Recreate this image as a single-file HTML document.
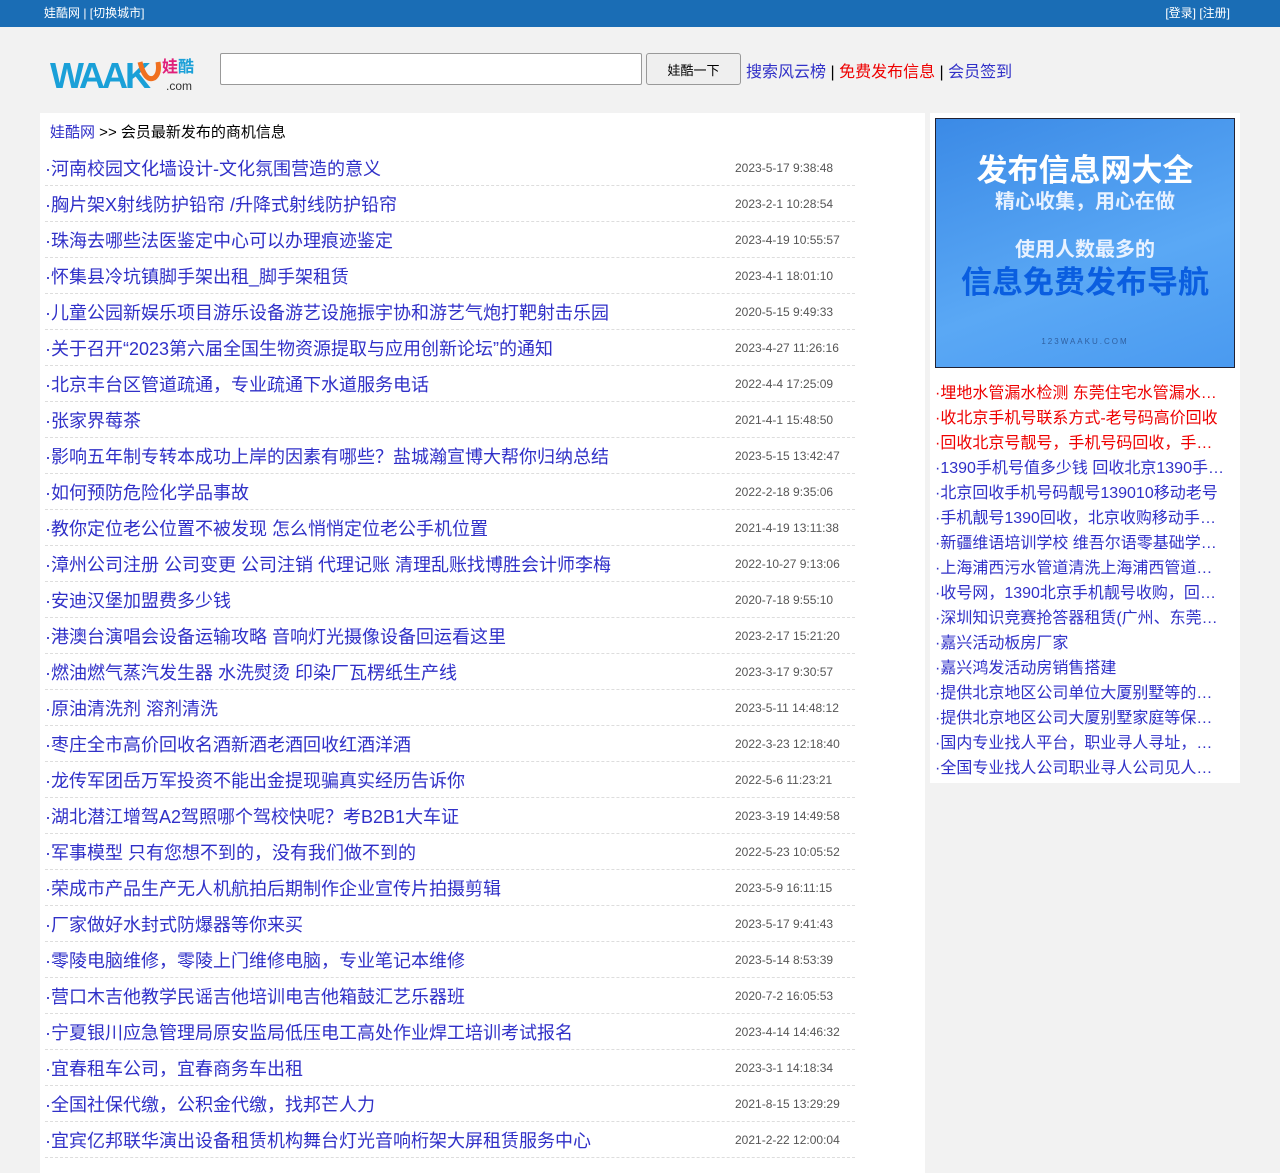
<!DOCTYPE html>
<html><head><meta charset="utf-8">
<style>
*{margin:0;padding:0;box-sizing:border-box}
body{width:1280px;height:1167px;overflow:hidden;background:#f2f2f2;font-family:"Liberation Sans","Noto Sans CJK SC",sans-serif}
a{text-decoration:none}
.top{height:27px;background:#1a6db5;color:#fff;font-size:12px;line-height:27px;position:relative}
.top .l{position:absolute;left:44px}
.top .r{position:absolute;right:50px}
.logo{position:absolute;left:50px;top:52px;width:150px;height:42px}
.search{position:absolute;left:220px;top:53px;width:422px;height:32px;border:1px solid #999;background:#fff;border-radius:2px}
.btn{position:absolute;left:646px;top:53px;width:95px;height:32px;border:1px solid #999;background:#efefef;border-radius:3px;font-size:13px;text-align:center;line-height:34px;color:#000}
.nav{position:absolute;left:746px;top:58px;font-size:16px;color:#000}
.nav .b{color:#3030c8}.nav .red{color:#e00}
.main{position:absolute;left:40px;top:113px;width:885px;height:1060px;background:#fff}
.crumb{position:absolute;left:10px;top:8px;font-size:15px;color:#000}
.crumb a{color:#3030c8}
.list{position:absolute;left:5px;top:37px;width:810px}
.row{height:36px;border-bottom:1px dashed #ddd;position:relative;white-space:nowrap}
.row a{position:absolute;left:0;top:5px;font-size:18px;color:#3030c8}
.row span{position:absolute;left:690px;top:11px;font-size:12px;color:#555}
.side{position:absolute;left:930px;top:113px;width:310px;height:670px;background:#fff}
.ban{position:absolute;left:5px;top:5px;width:300px;height:250px;border:1px solid #223;background:linear-gradient(160deg,#3b8ae6,#5aa8f5 60%,#4a9af0);text-align:center;font-weight:bold;overflow:hidden}
.ban .t1{position:absolute;top:26px;width:100%;font-size:31px;color:#fff}
.ban .t2{position:absolute;top:66px;width:100%;font-size:20px;color:#e8f2ff}
.ban .t3{position:absolute;top:114px;width:100%;font-size:20px;color:#e8f2ff}
.ban .t4{position:absolute;top:138px;width:100%;font-size:31px;color:#0a5ee0}
.ban .t5{position:absolute;top:218px;width:100%;font-size:8px;color:#3060a0;letter-spacing:2px;font-weight:normal}
.slist{position:absolute;left:5px;top:266px;width:290px}
.slist div{height:25px;font-size:16px;color:#3030c8;white-space:nowrap;overflow:hidden;text-overflow:ellipsis}
.slist .red{color:#e00}
</style></head><body>
<div class="top"><span class="l">娃酷网 | [切换城市]</span><span class="r">[登录] [注册]</span></div>
<svg class="logo" viewBox="0 0 150 42">
<text x="0" y="36" font-family="Liberation Sans" font-size="36" font-weight="bold" fill="#1aa0d8" letter-spacing="-3">WAAK</text>
<path d="M90 10 Q95 30 104 26 Q110 22 108 10" stroke="#f07020" stroke-width="5" fill="none"/>
<text x="112" y="20" font-family="Noto Sans CJK SC" font-size="16" font-weight="bold" fill="#e0207a">娃</text>
<text x="128" y="20" font-family="Noto Sans CJK SC" font-size="16" font-weight="bold" fill="#1aa0d8">酷</text>
<text x="116" y="38" font-family="Liberation Sans" font-size="12" fill="#333">.com</text>
</svg>
<div class="search"></div>
<div class="btn">娃酷一下</div>
<div class="nav"><span class="b">搜索风云榜</span> | <span class="red">免费发布信息</span> | <span class="b">会员签到</span></div>
<div class="main">
<div class="crumb"><a>娃酷网</a> &gt;&gt; 会员最新发布的商机信息</div>
<div class="list">
<div class="row"><a>·河南校园文化墙设计-文化氛围营造的意义</a><span>2023-5-17 9:38:48</span></div>
<div class="row"><a>·胸片架X射线防护铅帘 /升降式射线防护铅帘</a><span>2023-2-1 10:28:54</span></div>
<div class="row"><a>·珠海去哪些法医鉴定中心可以办理痕迹鉴定</a><span>2023-4-19 10:55:57</span></div>
<div class="row"><a>·怀集县冷坑镇脚手架出租_脚手架租赁</a><span>2023-4-1 18:01:10</span></div>
<div class="row"><a>·儿童公园新娱乐项目游乐设备游艺设施振宇协和游艺气炮打靶射击乐园</a><span>2020-5-15 9:49:33</span></div>
<div class="row"><a>·关于召开“2023第六届全国生物资源提取与应用创新论坛”的通知</a><span>2023-4-27 11:26:16</span></div>
<div class="row"><a>·北京丰台区管道疏通，专业疏通下水道服务电话</a><span>2022-4-4 17:25:09</span></div>
<div class="row"><a>·张家界莓茶</a><span>2021-4-1 15:48:50</span></div>
<div class="row"><a>·影响五年制专转本成功上岸的因素有哪些？盐城瀚宣博大帮你归纳总结</a><span>2023-5-15 13:42:47</span></div>
<div class="row"><a>·如何预防危险化学品事故</a><span>2022-2-18 9:35:06</span></div>
<div class="row"><a>·教你定位老公位置不被发现 怎么悄悄定位老公手机位置</a><span>2021-4-19 13:11:38</span></div>
<div class="row"><a>·漳州公司注册 公司变更 公司注销 代理记账 清理乱账找博胜会计师李梅</a><span>2022-10-27 9:13:06</span></div>
<div class="row"><a>·安迪汉堡加盟费多少钱</a><span>2020-7-18 9:55:10</span></div>
<div class="row"><a>·港澳台演唱会设备运输攻略 音响灯光摄像设备回运看这里</a><span>2023-2-17 15:21:20</span></div>
<div class="row"><a>·燃油燃气蒸汽发生器 水洗熨烫 印染厂瓦楞纸生产线</a><span>2023-3-17 9:30:57</span></div>
<div class="row"><a>·原油清洗剂 溶剂清洗</a><span>2023-5-11 14:48:12</span></div>
<div class="row"><a>·枣庄全市高价回收名酒新酒老酒回收红酒洋酒</a><span>2022-3-23 12:18:40</span></div>
<div class="row"><a>·龙传军团岳万军投资不能出金提现骗真实经历告诉你</a><span>2022-5-6 11:23:21</span></div>
<div class="row"><a>·湖北潜江增驾A2驾照哪个驾校快呢？考B2B1大车证</a><span>2023-3-19 14:49:58</span></div>
<div class="row"><a>·军事模型 只有您想不到的，没有我们做不到的</a><span>2022-5-23 10:05:52</span></div>
<div class="row"><a>·荣成市产品生产无人机航拍后期制作企业宣传片拍摄剪辑</a><span>2023-5-9 16:11:15</span></div>
<div class="row"><a>·厂家做好水封式防爆器等你来买</a><span>2023-5-17 9:41:43</span></div>
<div class="row"><a>·零陵电脑维修，零陵上门维修电脑，专业笔记本维修</a><span>2023-5-14 8:53:39</span></div>
<div class="row"><a>·营口木吉他教学民谣吉他培训电吉他箱鼓汇艺乐器班</a><span>2020-7-2 16:05:53</span></div>
<div class="row"><a>·宁夏银川应急管理局原安监局低压电工高处作业焊工培训考试报名</a><span>2023-4-14 14:46:32</span></div>
<div class="row"><a>·宜春租车公司，宜春商务车出租</a><span>2023-3-1 14:18:34</span></div>
<div class="row"><a>·全国社保代缴，公积金代缴，找邦芒人力</a><span>2021-8-15 13:29:29</span></div>
<div class="row"><a>·宜宾亿邦联华演出设备租赁机构舞台灯光音响桁架大屏租赁服务中心</a><span>2021-2-22 12:00:04</span></div>
</div>
</div>
<div class="side">
<div class="ban"><div class="t1">发布信息网大全</div><div class="t2">精心收集，用心在做</div><div class="t3">使用人数最多的</div><div class="t4">信息免费发布导航</div><div class="t5">123WAAKU.COM</div></div>
<div class="slist">
<div class="red">·埋地水管漏水检测 东莞住宅水管漏水检测</div>
<div class="red">·收北京手机号联系方式-老号码高价回收</div>
<div class="red">·回收北京号靓号，手机号码回收，手机号</div>
<div>·1390手机号值多少钱 回收北京1390手机号</div>
<div>·北京回收手机号码靓号139010移动老号</div>
<div>·手机靓号1390回收，北京收购移动手机号</div>
<div>·新疆维语培训学校 维吾尔语零基础学习班</div>
<div>·上海浦西污水管道清洗上海浦西管道疏通</div>
<div>·收号网，1390北京手机靓号收购，回收号</div>
<div>·深圳知识竞赛抢答器租赁(广州、东莞、惠州</div>
<div>·嘉兴活动板房厂家</div>
<div>·嘉兴鸿发活动房销售搭建</div>
<div>·提供北京地区公司单位大厦别墅等的开荒保洁</div>
<div>·提供北京地区公司大厦别墅家庭等保洁服务</div>
<div>·国内专业找人平台，职业寻人寻址，正规公司</div>
<div>·全国专业找人公司职业寻人公司见人付款</div>
</div>
</div>
</body></html>
